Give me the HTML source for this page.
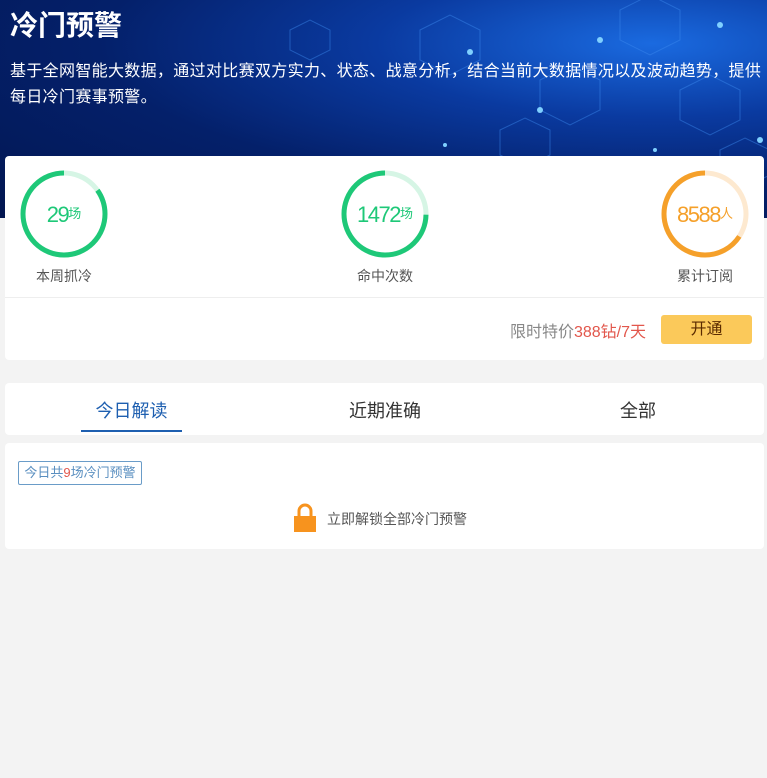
<!DOCTYPE html>
<html><head><meta charset="utf-8"><style>
body{margin:0;width:767px;height:778px;background:#f3f3f3;font-family:"Liberation Sans","Noto Sans CJK SC",sans-serif;position:relative;overflow:hidden}
.hdr{position:absolute;left:0;top:0;width:767px;height:218px;background:radial-gradient(ellipse at 85% 20%,#1a6ae0 0%,#0a3aa0 30%,#04206a 60%,#021650 100%)}
.t{position:absolute;left:10px;top:4px;color:#fff;font-size:28px;font-weight:bold}
.d{position:absolute;left:10px;top:59px;width:757px;color:#fff;font-size:16px;line-height:26px;white-space:nowrap;letter-spacing:0.33px}
.card{position:absolute;background:#fff;border-radius:4px;left:5px;width:759px}
.lbl{position:absolute;font-size:14px;color:#555;width:100px;text-align:center;top:266px}
.num{position:absolute;width:100px;text-align:center;top:202px;font-size:22px;letter-spacing:-1.5px}
.num small{font-size:13px;letter-spacing:0;vertical-align:4px}
</style></head><body>
<div class="hdr">
<svg width="767" height="218" style="position:absolute;left:0;top:0" fill="none" stroke="#3d8cf0" stroke-opacity=".45">
<polygon points="420,30 450,15 480,30 480,60 450,75 420,60"/>
<polygon points="620,10 650,-5 680,10 680,40 650,55 620,40"/>
<polygon points="540,80 570,65 600,80 600,110 570,125 540,110"/>
<polygon points="680,90 710,75 740,90 740,120 710,135 680,120"/>
<polygon points="290,30 310,20 330,30 330,50 310,60 290,50"/>
<polygon points="500,130 525,118 550,130 550,155 525,167 500,155"/>
<polygon points="720,150 745,138 770,150 770,175 745,187 720,175"/>
<g fill="#7fd0ff" stroke="none"><circle cx="470" cy="52" r="3"/><circle cx="600" cy="40" r="3"/><circle cx="720" cy="25" r="3"/><circle cx="445" cy="145" r="2"/><circle cx="540" cy="110" r="3"/><circle cx="655" cy="150" r="2"/><circle cx="760" cy="140" r="3"/></g>
</svg>
<div class="t">冷门预警</div>
<div class="d">基于全网智能大数据，通过对比赛双方实力、状态、战意分析，结合当前大数据情况以及波动趋势，提供<br>每日冷门赛事预警。</div>
</div>
<div class="card" style="top:156px;height:204px"></div>
<div style="position:absolute;left:5px;top:297px;width:759px;height:1px;background:#eee"></div>
<svg width="767" height="300" style="position:absolute;left:0;top:0" fill="none" stroke-width="5">
<circle cx="64" cy="214" r="41" stroke="#d6f5e5"/>
<circle cx="64" cy="214" r="41" stroke="#1ec878" stroke-dasharray="219 300" stroke-dashoffset="-39" transform="rotate(-90 64 214)"/>
<circle cx="385" cy="214" r="41" stroke="#d6f5e5"/>
<circle cx="385" cy="214" r="41" stroke="#1ec878" stroke-dasharray="193 300" stroke-dashoffset="-65" transform="rotate(-90 385 214)"/>
<circle cx="705" cy="214" r="41" stroke="#fde9d0"/>
<circle cx="705" cy="214" r="41" stroke="#f5a02a" stroke-dasharray="170 300" stroke-dashoffset="-88" transform="rotate(-90 705 214)"/>
</svg>
<div class="num" style="left:14px;color:#1ec878">29<small>场</small></div>
<div class="num" style="left:335px;color:#1ec878">1472<small>场</small></div>
<div class="num" style="left:655px;color:#f5a02a">8588<small>人</small></div>
<div class="lbl" style="left:14px">本周抓冷</div>
<div class="lbl" style="left:335px">命中次数</div>
<div class="lbl" style="left:655px">累计订阅</div>
<div style="position:absolute;right:121px;top:318px;font-size:16px;color:#888">限时特价<span style="color:#e2574c">388钻/7天</span></div>
<div style="position:absolute;left:661px;top:315px;width:91px;height:29px;background:#fbc95a;border-radius:3px;text-align:center;line-height:29px;font-size:16px;color:#5a2a00">开通</div>
<div class="card" style="top:383px;height:52px"></div>
<div style="position:absolute;left:81px;top:397px;width:101px;text-align:center;font-size:18px;color:#1e5fb0">今日解读</div>
<div style="position:absolute;left:81px;top:430px;width:101px;height:2px;background:#1e5fb0"></div>
<div style="position:absolute;left:335px;top:397px;width:100px;text-align:center;font-size:18px;color:#333">近期准确</div>
<div style="position:absolute;left:588px;top:397px;width:100px;text-align:center;font-size:18px;color:#333">全部</div>
<div class="card" style="top:443px;height:106px"></div>
<div style="position:absolute;left:18px;top:461px;width:122px;height:22px;border:1px solid #6a9cc8;border-radius:2px;font-size:13px;line-height:22px;text-align:center;color:#5a8fc0">今日共<span style="color:#e2574c">9</span>场冷门预警</div>
<svg width="24" height="30" style="position:absolute;left:293px;top:503px"><path d="M6 13V8a6 6 0 0 1 12 0v5" fill="none" stroke="#f7931e" stroke-width="3"/><rect x="1" y="13" width="22" height="16" fill="#f7931e"/></svg>
<div style="position:absolute;left:327px;top:509px;font-size:14px;color:#555">立即解锁全部冷门预警</div>
</body></html>
